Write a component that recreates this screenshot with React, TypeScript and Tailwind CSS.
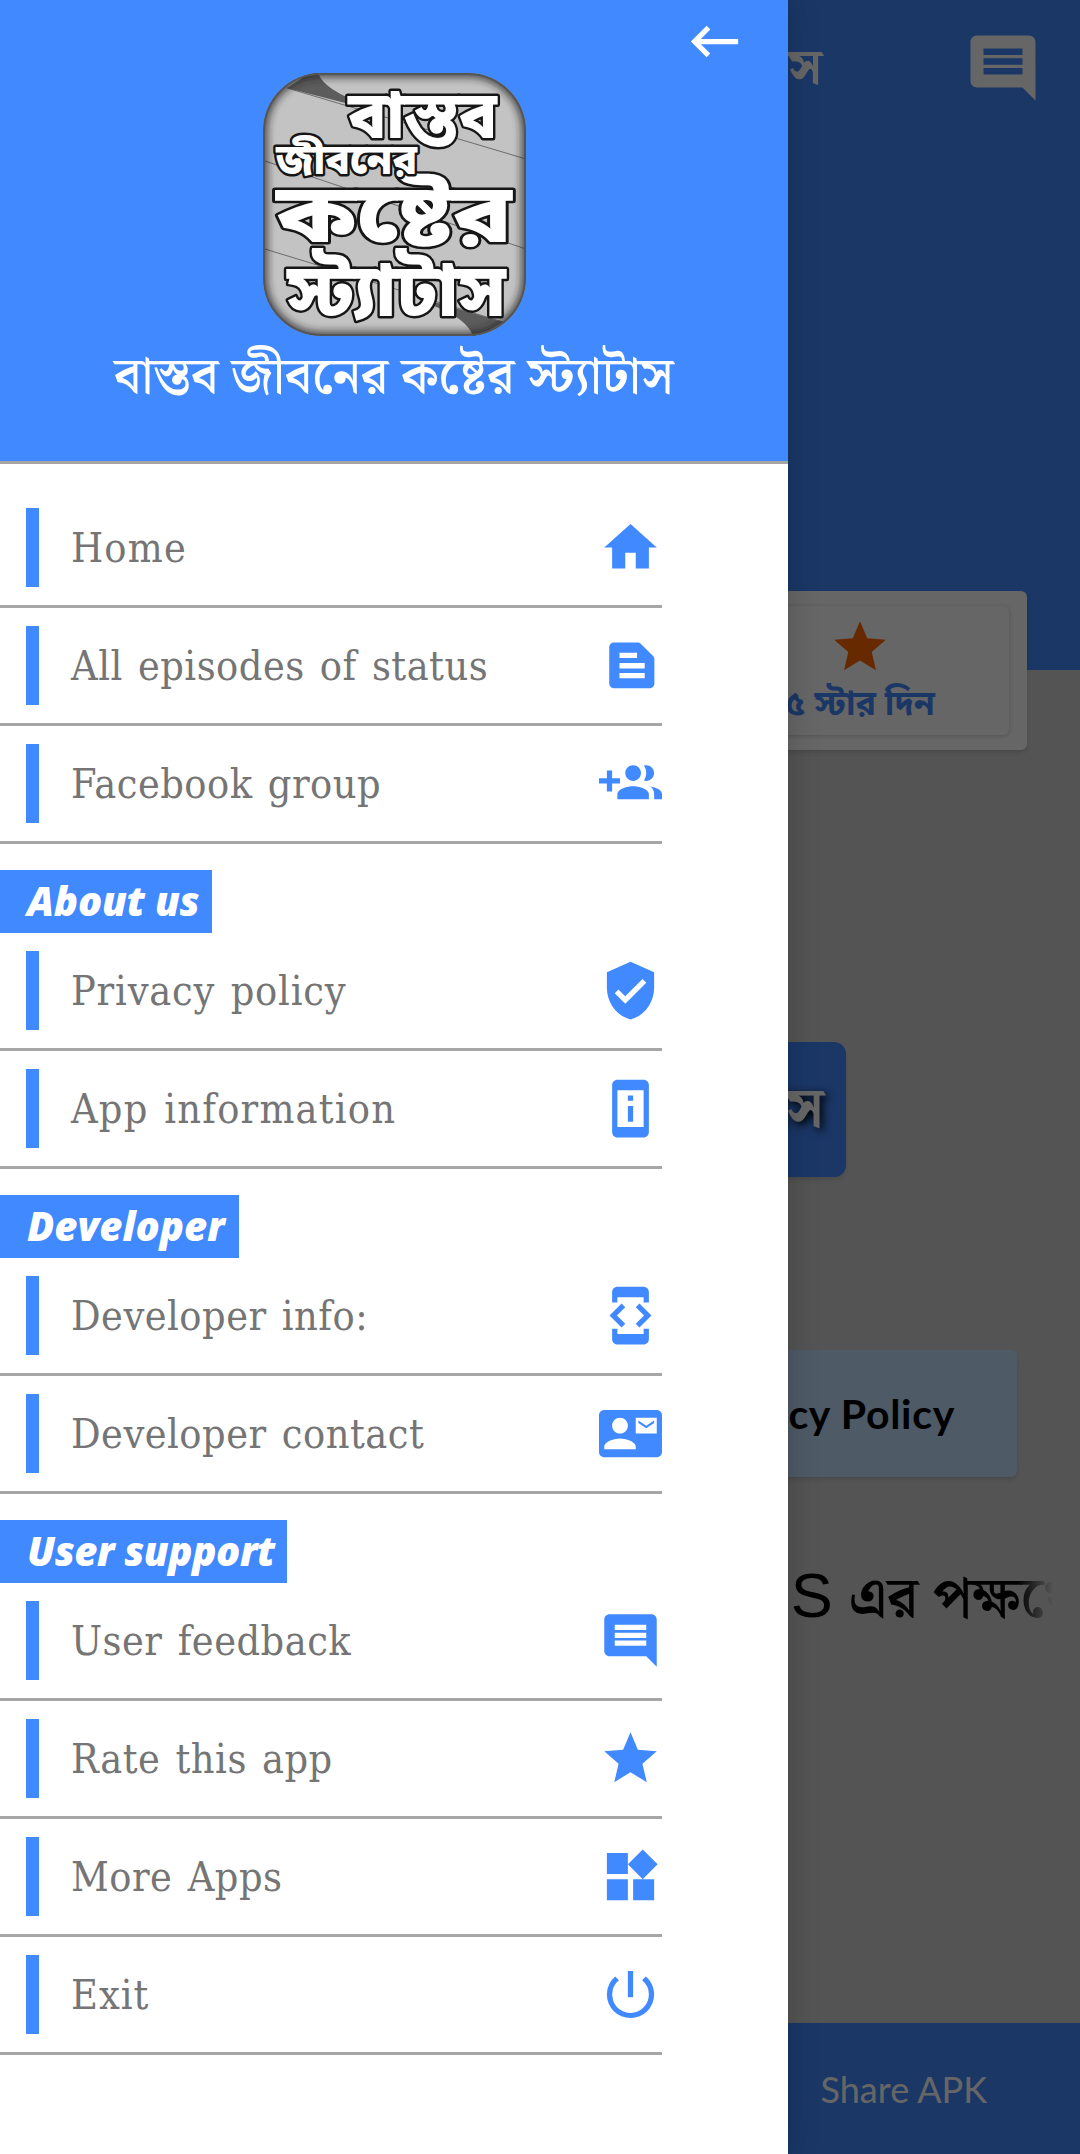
import type { IconType } from "react-icons";
import {
  MdComment,
  MdContactMail,
  MdDeveloperMode,
  MdHome,
  MdKeyboardBackspace,
  MdPermDeviceInformation,
  MdPowerSettingsNew,
  MdStar,
  MdVerifiedUser,
  MdWidgets,
} from "react-icons/md";

const EpisodesIcon = ({ className }: { className?: string }) => (
  <svg viewBox="0 0 24 24" fill="currentColor" className={className}>
    <path d="M5.7 3.2C4.7 3.2 3.9 4 3.9 5v13.9c0 1 .8 1.8 1.8 1.8h13.6c1 0 1.8-.8 1.8-1.8V9.6c0-.5-.2-.9-.5-1.2l-4.7-4.7c-.3-.3-.8-.5-1.2-.5H5.7zM7.8 7.1h6.7v2H7.8v-2zm0 3.9h9.6v2.1H7.8V11zm0 3.9h9.6v2H7.8v-2z" />
  </svg>
);

const GroupAddIcon = ({ className }: { className?: string }) => (
  <svg viewBox="0 0 24 24" fill="currentColor" className={className}>
    <path d="M8 10H5V7H3v3H0v2h3v3h2v-3h3v-2zm10 1c1.66 0 2.99-1.34 2.99-3S19.66 5 18 5c-.32 0-.63.05-.91.14.57.81.9 1.79.9 2.86s-.34 2.04-.9 2.86c.28.09.59.14.91.14zm-5 0c1.66 0 2.99-1.34 2.99-3S14.66 5 13 5c-1.66 0-3 1.34-3 3s1.34 3 3 3zm6.62 2.16c.83.73 1.38 1.66 1.38 2.84v2h3v-2c0-1.54-2.37-2.49-4.38-2.84zM13 13c-2 0-6 1-6 3v2h12v-2c0-2-4-3-6-3z" />
  </svg>
);

type Item = { label: string; icon: IconType | typeof EpisodesIcon; tracking?: string };
type Section = { title?: string; width?: string; items: Item[] };

const sections: Section[] = [
  {
    items: [
      { label: "Home", icon: MdHome, tracking: "tracking-[1.2px]" },
      { label: "All episodes of status", icon: EpisodesIcon },
      { label: "Facebook group", icon: GroupAddIcon },
    ],
  },
  {
    title: "About us",
    width: "w-[212px] tracking-[-0.2px]",
    items: [
      { label: "Privacy policy", icon: MdVerifiedUser, tracking: "tracking-[0.8px]" },
      { label: "App information", icon: MdPermDeviceInformation, tracking: "tracking-[1.2px]" },
    ],
  },
  {
    title: "Developer",
    width: "w-[239px]",
    items: [
      { label: "Developer info:", icon: MdDeveloperMode },
      { label: "Developer contact", icon: MdContactMail },
    ],
  },
  {
    title: "User support",
    width: "w-[287px] tracking-[-0.4px]",
    items: [
      { label: "User feedback", icon: MdComment },
      { label: "Rate this app", icon: MdStar },
      { label: "More Apps", icon: MdWidgets },
      { label: "Exit", icon: MdPowerSettingsNew, tracking: "tracking-[1px]" },
    ],
  },
];

const Logo = () => (
  <svg viewBox="0 0 263 263" className="size-[263px]">
    <defs>
      <clipPath id="tile">
        <rect width="263" height="263" rx="58" />
      </clipPath>
      <filter id="soft" x="-10%" y="-10%" width="120%" height="120%">
        <feGaussianBlur stdDeviation="4" />
      </filter>
    </defs>
    <g clipPath="url(#tile)">
      <rect width="263" height="263" fill="#c3c3c3" />
      <path d="M24 15 L50 -2 H55 C56 10 76 22 98 30 L90 32 Z" fill="#5c5c5c" />
      <path d="M24 15 L263 86 M2 88 L263 176 M2 176 L240 249" stroke="#555" strokeWidth="0.8" fill="none" />
      <path d="M168 228 L240 249 L215 264 H210 C208 254 196 242 168 232 Z" fill="#5c5c5c" />
      <rect width="263" height="263" rx="58" fill="none" stroke="#222" strokeWidth="7" filter="url(#soft)" />
      <rect x="1" y="1" width="261" height="261" rx="57" fill="none" stroke="#555" strokeWidth="2" />
    </g>
    <g
      fill="#fff"
      stroke="#161616"
      strokeWidth="5"
      strokeLinejoin="round"
      paintOrder="stroke"
      fontFamily="'Noto Sans Bengali', 'Noto Sans', sans-serif"
      fontWeight="900"
    >
      <text x="85" y="65" fontSize="66" textLength="149" lengthAdjust="spacingAndGlyphs">বাস্তব</text>
      <text x="13" y="169" fontSize="82" textLength="236" lengthAdjust="spacingAndGlyphs">কষ্টের</text>
      <text x="13" y="101" fontSize="42" textLength="141" lengthAdjust="spacingAndGlyphs">জীবনের</text>
      <text x="24" y="243" fontSize="74" textLength="219" lengthAdjust="spacingAndGlyphs">স্ট্যাটাস</text>
    </g>
  </svg>
);

const Home = () => (
  <div className="flex h-full flex-col bg-[#d3d3d3]">
    <div className="flex h-[670px] shrink-0 items-start justify-end bg-[#4389ff] pt-[29px] pr-[38px]">
      <span className="mr-[142px] text-right font-['Noto_Serif_Bengali'] text-[50px] leading-[78px] font-extrabold whitespace-nowrap text-white">
        কষ্টের স্ট্যাটাস
      </span>
      <MdComment className="size-[78px] text-white" />
    </div>
    <div className="relative z-10 mx-[53px] -mt-[79px] flex h-[159px] shrink-0 justify-end rounded-md bg-white py-[15px] pr-[18px] shadow-md">
      <div className="flex w-[298px] flex-col items-center rounded-md bg-white pt-[10px] shadow-[0_1px_5px_rgba(0,0,0,0.2)]">
        <MdStar className="size-[62px] shrink-0 text-[#ff6600]" />
        <span className="mt-[4px] text-[34px] leading-[50px] font-bold whitespace-nowrap text-[#4389ff]">৫ স্টার দিন</span>
      </div>
    </div>
    <div className="mx-[234px] mt-[292px] flex h-[135px] shrink-0 items-center justify-end rounded-xl bg-[#4389ff] pr-[22px] shadow-md">
      <span className="font-['Noto_Serif_Bengali'] text-[56px] font-extrabold whitespace-nowrap text-white [text-shadow:3px_3px_8px_#000]">
        স্ট্যাটাস
      </span>
    </div>
    <div className="mt-[173px] mr-[63px] ml-auto flex h-[127px] w-[460px] shrink-0 items-center justify-end rounded-md bg-[#c3e1ff] pr-[62px] shadow-md">
      <span className="font-['Lato'] text-[41px] font-bold tracking-[0.7px] text-black">Privacy Policy</span>
    </div>
    <div className="mt-[70px] mr-[27px] ml-auto flex h-[98px] w-[600px] shrink-0 items-center justify-end overflow-hidden [mask-image:linear-gradient(to_left,transparent,#000_36px)]">
      <span className="-mr-[25px] whitespace-nowrap text-black">
        <span className="mr-[16px] font-['Liberation_Sans'] text-[63px]">APPS</span>
        <span className="font-['Noto_Serif_Bengali'] text-[58px] font-semibold">এর পক্ষথে</span>
      </span>
    </div>
    <div className="mt-auto flex h-[131px] shrink-0 items-center justify-end bg-[#4389ff] pr-[93px]">
      <span className="font-['Lato'] text-[36px] text-white">Share APK</span>
    </div>
  </div>
);

const Drawer = () => (
  <aside className="absolute inset-y-0 left-0 flex w-[788px] flex-col bg-white shadow-[0_0_30px_rgba(0,0,0,0.2)]">
    <header className="flex h-[464px] shrink-0 flex-col items-center border-b-[3px] border-[#a6a6a6] bg-[#4189ff] text-white">
      <button className="mt-[10px] mr-[42px] self-end">
        <MdKeyboardBackspace className="size-[63px]" />
      </button>
      <Logo />
      <h1 className="pt-[4px] font-['Noto_Serif_Bengali'] text-[51px] leading-[76px] font-semibold whitespace-nowrap">
        বাস্তব জীবনের কষ্টের স্ট্যাটাস
      </h1>
    </header>
    {sections.map((section, i) => (
      <section key={i} className="mt-[26px]">
        {section.title && (
          <h2
            className={`${section.width} h-[63px] bg-[#4189ff] pl-[27px] font-['Open_Sans'] text-[40px] leading-[62px] font-extrabold whitespace-nowrap text-white italic`}
          >
            {section.title}
          </h2>
        )}
        <ul>
          {section.items.map(({ label, icon: Icon, tracking = "tracking-[0.5px]" }) => (
            <li key={label} className="flex h-[118px] w-[662px] items-center border-b-[3px] border-[#a6a6a6]">
              <span className="ml-[26px] h-[79px] w-[13px] bg-[#4189ff]" />
              <span
                className={`${tracking} ml-[32px] flex-1 pt-[2px] font-['DejaVu_Serif_Condensed','DejaVu_Serif',serif] text-[41px] leading-[79px] whitespace-nowrap text-[#757575] [word-spacing:3px]`}
              >
                {label}
              </span>
              <Icon className="size-[63px] text-[#4189ff]" />
            </li>
          ))}
        </ul>
      </section>
    ))}
  </aside>
);

export default function App() {
  return (
    <div className="relative h-[2154px] w-[1080px] overflow-hidden font-['Noto_Sans_Bengali','Noto_Sans',sans-serif]">
      <Home />
      <div className="absolute inset-0 z-10 bg-black/60" />
      <div className="absolute inset-0 z-20">
        <Drawer />
      </div>
    </div>
  );
}
